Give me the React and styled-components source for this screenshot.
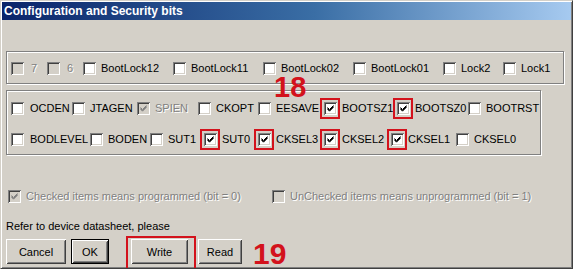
import React from "react";
import styled, { createGlobalStyle } from "styled-components";

const Global = createGlobalStyle`
  html, body { margin: 0; padding: 0; background: #d4d0c8; }
  * { box-sizing: border-box; }
`;

const RED = "#d3121c";

const Window = styled.div`
  position: relative;
  width: 573px;
  height: 269px;
  background: #d4d0c8;
  border: 1px solid;
  border-color: #d4d0c8 #404040 #404040 #d4d0c8;
  box-shadow: inset 1px 1px #fff, inset -1px -1px #808080;
  padding: 1px;
  display: flex;
  flex-direction: column;
  overflow: hidden;
  font-family: "Liberation Sans", Arial, sans-serif;
  font-size: 11px;
  color: #000;
`;

const TitleBar = styled.div`
  height: 18px;
  flex: none;
  background: linear-gradient(90deg, #0a246a 0%, #3a6ea5 55%, #a6caf0 100%);
  color: #fff;
  font-weight: bold;
  font-size: 12px;
  line-height: 18px;
  padding-left: 2px;
  white-space: nowrap;
`;

const Body = styled.div`
  display: flex;
  flex-direction: column;
  padding: 0 4px;
`;

const Group = styled.div`
  width: ${(p) => p.$w}px;
  height: ${(p) => (p.$h ? `${p.$h}px` : "auto")};
  margin-top: ${(p) => p.$mt}px;
  border: 1px solid #808080;
  box-shadow: inset 1px 1px #fff, 1px 1px #fff;
  padding: ${(p) => p.$pad};
  display: flex;
  flex-direction: column;
  gap: 18px;
`;

const Row = styled.div`
  display: flex;
  align-items: center;
  height: 13px;
  margin-left: ${(p) => p.$ml || 0}px;
  margin-top: ${(p) => p.$mt || 0}px;
`;

const Item = styled.div`
  flex: none;
  width: ${(p) => (p.$w ? `${p.$w}px` : "auto")};
  display: flex;
  align-items: center;
  gap: ${(p) => p.$gap || 5}px;
  height: 13px;
`;

const Box = styled.span`
  position: relative;
  flex: none;
  width: 13px;
  height: 13px;
  display: inline-flex;
  background: ${(p) => (p.$disabled ? "#d4d0c8" : "#fff")};
  box-shadow: inset 1px 1px #808080, inset -1px -1px #fff,
    inset 2px 2px #404040, inset -2px -2px #d4d0c8;
  &::after {
    content: "";
    display: ${(p) => (p.$marked ? "block" : "none")};
    position: absolute;
    top: -4px;
    left: -4px;
    right: -3px;
    bottom: -4px;
    border: 2px solid ${RED};
  }
`;

const Label = styled.span`
  white-space: nowrap;
  line-height: 13px;
  color: ${(p) => (p.$disabled ? "#808080" : "#000")};
  text-shadow: ${(p) => (p.$disabled ? "1px 1px 0 #fff" : "none")};
`;

const Plain = styled.div`
  margin-top: ${(p) => p.$mt}px;
  line-height: 13px;
  white-space: nowrap;
`;

const Buttons = styled.div`
  display: flex;
  align-items: center;
  gap: 5px;
  margin-top: 6px;
`;

const Btn = styled.button`
  position: relative;
  flex: none;
  width: ${(p) => p.$w}px;
  height: 25px;
  margin-left: ${(p) => p.$ml || 0}px;
  padding: 0;
  background: #d4d0c8;
  font-family: "Liberation Sans", Arial, sans-serif;
  font-size: 11px;
  color: #000;
  border: ${(p) => (p.$default ? "1px solid #000" : "none")};
  box-shadow: inset 1px 1px #fff, inset -1px -1px #404040,
    inset 2px 2px #d4d0c8, inset -2px -2px #808080;
  &::after {
    content: "";
    display: ${(p) => (p.$marked ? "block" : "none")};
    position: absolute;
    top: -3px;
    left: -5px;
    right: -8px;
    bottom: -10px;
    border: 2px solid ${RED};
  }
`;

const Callout = styled.span`
  position: absolute;
  left: ${(p) => p.$x}px;
  top: ${(p) => p.$y}px;
  font-family: "Liberation Sans", Arial, sans-serif;
  font-weight: bold;
  font-size: ${(p) => p.$size}px;
  line-height: ${(p) => p.$lh}px;
  color: ${RED};
  pointer-events: none;
`;

const Check = ({ disabled }) => (
  <svg width="13" height="13" viewBox="0 0 13 13" style={{ position: "absolute", left: 0, top: 0 }}>
    <path
      d="M3.5 5.5 L5.5 7.5 L9.5 3.5 M3.5 6.5 L5.5 8.5 L9.5 4.5 M3.5 7.2 L5.5 9.2 L9.5 5.2"
      fill="none"
      stroke={disabled ? "#808080" : "#000"}
      strokeWidth="1"
    />
  </svg>
);

const CheckItem = ({ label, w, disabled, checked, marked, gap }) => (
  <Item $w={w} $gap={gap}>
    <Box $disabled={disabled} $marked={marked}>
      {checked && <Check disabled={disabled} />}
    </Box>
    <Label $disabled={disabled}>{label}</Label>
  </Item>
);

const group1 = [
  { label: "7", w: 36, disabled: true, gap: 7 },
  { label: "6", w: 36, disabled: true, gap: 7 },
  { label: "BootLock12", w: 90 },
  { label: "BootLock11", w: 90 },
  { label: "BootLock02", w: 90 },
  { label: "BootLock01", w: 90 },
  { label: "Lock2", w: 60 },
  { label: "Lock1" },
];

const row1 = [
  { label: "OCDEN", w: 61, gap: 6 },
  { label: "JTAGEN", w: 65 },
  { label: "SPIEN", w: 61, disabled: true, checked: true },
  { label: "CKOPT", w: 60 },
  { label: "EESAVE", w: 66 },
  { label: "BOOTSZ1", w: 73, checked: true, marked: true },
  { label: "BOOTSZ0", w: 71, checked: true, marked: true },
  { label: "BOOTRST" },
];

const row2 = [
  { label: "BODLEVEL", w: 79, gap: 6 },
  { label: "BODEN", w: 60 },
  { label: "SUT1", w: 54 },
  { label: "SUT0", w: 54, checked: true, marked: true },
  { label: "CKSEL3", w: 66, checked: true, marked: true },
  { label: "CKSEL2", w: 67, checked: true, marked: true },
  { label: "CKSEL1", w: 65, checked: true, marked: true, gap: 4 },
  { label: "CKSEL0" },
];

export default function App() {
  return (
    <>
      <Global />
      <Window>
        <TitleBar>Configuration and Security bits</TitleBar>
        <Body>
          <Group $w={558} $h={33} $mt={31} $pad="10px 0 0 4px">
            <Row>
              {group1.map((it) => (
                <CheckItem key={it.label} {...it} />
              ))}
            </Row>
          </Group>
          <Group $w={535} $mt={6} $pad="11px 0 8px 4px">
            <Row>
              {row1.map((it) => (
                <CheckItem key={it.label} {...it} />
              ))}
            </Row>
            <Row>
              {row2.map((it) => (
                <CheckItem key={it.label} {...it} />
              ))}
            </Row>
          </Group>
          <Row $ml={2} $mt={35}>
            <CheckItem w={264} disabled checked label="Checked items means programmed (bit = 0)" />
            <CheckItem disabled label="UnChecked items means unprogrammed (bit = 1)" />
          </Row>
          <Plain $mt={17}>Refer to device datasheet, please</Plain>
          <Buttons>
            <Btn $w={60}>Cancel</Btn>
            <Btn $w={38} $default>OK</Btn>
            <Btn $w={57} $ml={17} $marked>Write</Btn>
            <Btn $w={44} $ml={5}>Read</Btn>
          </Buttons>
        </Body>
        <Callout $x={273} $y={76} $size={29} $lh={21}>18</Callout>
        <Callout $x={252} $y={242} $size={30} $lh={22}>19</Callout>
      </Window>
    </>
  );
}
